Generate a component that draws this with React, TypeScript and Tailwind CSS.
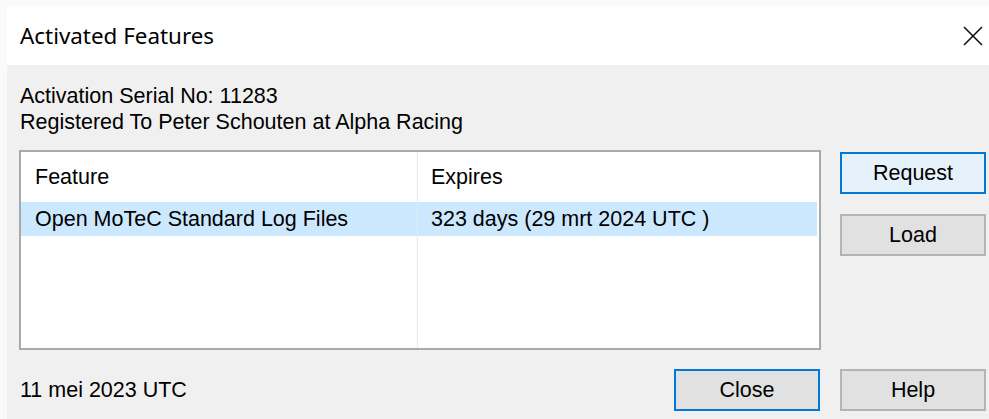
import React from 'react';

const font = { fontFamily: '"Liberation Sans", Arial, sans-serif' };

type BtnProps = { label: string; variant?: 'default' | 'focused' | 'hover' };

const DialogButton = ({ label, variant = 'default' }: BtnProps) => {
  const tone =
    variant === 'hover'
      ? 'border-[#0078d7] bg-[#e5f1fb]'
      : variant === 'focused'
        ? 'border-[#0078d7] bg-[#e1e1e1]'
        : 'border-[#b4b4b4] bg-[#e1e1e1]';
  return (
    <button
      className={`w-[146px] h-[42px] border-2 ${tone} text-[21.5px] text-black flex items-center justify-center`}
      style={font}
    >
      {label}
    </button>
  );
};

const App = () => {
  return (
    <div className="w-[989px] h-[419px] bg-[#fafafa] pl-[7px] pt-[6px] flex flex-col overflow-hidden">
      {/* title bar */}
      <div className="h-[59px] bg-white flex items-center justify-between pl-[13px] pr-[6px] shrink-0">
        <span className="text-[22.4px] text-black" style={{ fontFamily: '"Noto Sans", "Open Sans", sans-serif' }}>
          Activated Features
        </span>
        <svg width="20" height="20" viewBox="0 0 20 20">
          <path d="M1 1 L19 19 M19 1 L1 19" stroke="#111" strokeWidth="1.6" fill="none" />
        </svg>
      </div>

      {/* body */}
      <div className="flex-1 bg-[#f0f0f0] pl-[12px] pr-[3px] pt-[18px] flex flex-col" style={font}>
        <div className="ml-[1px] text-[21.5px] leading-[26px] text-black">
          <div>Activation Serial No: 11283</div>
          <div>Registered To Peter Schouten at Alpha Racing</div>
        </div>

        <div className="mt-[15px] flex gap-[19px]">
          {/* feature list */}
          <div className="w-[802px] h-[200px] border-2 border-[#a9a9a9] bg-white flex text-[21.5px] text-black">
            <div className="w-[397px] flex flex-col border-r border-[#e2eaf3]">
              <div className="h-[50px] flex items-center pl-[14px]">Feature</div>
              <div className="h-[34px] flex items-center pl-[14px] bg-[#cce8ff]">Open MoTeC Standard Log Files</div>
            </div>
            <div className="flex-1 flex flex-col">
              <div className="h-[50px] flex items-center pl-[13px]">Expires</div>
              <div className="h-[34px] flex items-center pl-[13px] bg-[#cce8ff] mr-[2px]">323 days (29 mrt 2024 UTC )</div>
            </div>
          </div>

          <div className="flex flex-col gap-[20px] pt-[2px]">
            <DialogButton label="Request" variant="hover" />
            <DialogButton label="Load" />
          </div>
        </div>

        <div className="mt-[19px] flex items-center">
          <span className="ml-[1px] text-[21.5px] text-black">11 mei 2023 UTC</span>
          <div className="flex-1" />
          <DialogButton label="Close" variant="focused" />
          <div className="w-[20px]" />
          <DialogButton label="Help" />
        </div>
      </div>
    </div>
  );
};

export default App;
